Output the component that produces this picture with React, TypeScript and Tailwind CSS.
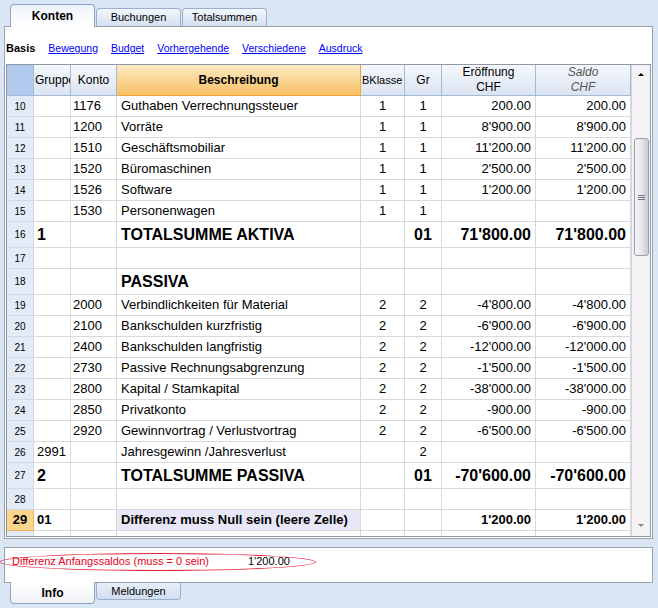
import React from "react";

type Row = {
  n?: number;
  grp?: string;
  konto?: string;
  desc?: string;
  bk?: string;
  gr?: string;
  er?: string;
  sa?: string;
  kind?: "big" | "diff";
};

const rows: Row[] = [
  { n: 10, konto: "1176", desc: "Guthaben Verrechnungssteuer", bk: "1", gr: "1", er: "200.00", sa: "200.00" },
  { n: 11, konto: "1200", desc: "Vorräte", bk: "1", gr: "1", er: "8'900.00", sa: "8'900.00" },
  { n: 12, konto: "1510", desc: "Geschäftsmobiliar", bk: "1", gr: "1", er: "11'200.00", sa: "11'200.00" },
  { n: 13, konto: "1520", desc: "Büromaschinen", bk: "1", gr: "1", er: "2'500.00", sa: "2'500.00" },
  { n: 14, konto: "1526", desc: "Software", bk: "1", gr: "1", er: "1'200.00", sa: "1'200.00" },
  { n: 15, konto: "1530", desc: "Personenwagen", bk: "1", gr: "1" },
  { n: 16, grp: "1", desc: "TOTALSUMME AKTIVA", gr: "01", er: "71'800.00", sa: "71'800.00", kind: "big" },
  { n: 17 },
  { n: 18, desc: "PASSIVA", kind: "big" },
  { n: 19, konto: "2000", desc: "Verbindlichkeiten für Material", bk: "2", gr: "2", er: "-4'800.00", sa: "-4'800.00" },
  { n: 20, konto: "2100", desc: "Bankschulden kurzfristig", bk: "2", gr: "2", er: "-6'900.00", sa: "-6'900.00" },
  { n: 21, konto: "2400", desc: "Bankschulden langfristig", bk: "2", gr: "2", er: "-12'000.00", sa: "-12'000.00" },
  { n: 22, konto: "2730", desc: "Passive Rechnungsabgrenzung", bk: "2", gr: "2", er: "-1'500.00", sa: "-1'500.00" },
  { n: 23, konto: "2800", desc: "Kapital / Stamkapital", bk: "2", gr: "2", er: "-38'000.00", sa: "-38'000.00" },
  { n: 24, konto: "2850", desc: "Privatkonto", bk: "2", gr: "2", er: "-900.00", sa: "-900.00" },
  { n: 25, konto: "2920", desc: "Gewinnvortrag / Verlustvortrag", bk: "2", gr: "2", er: "-6'500.00", sa: "-6'500.00" },
  { n: 26, grp: "2991", desc: "Jahresgewinn /Jahresverlust", gr: "2" },
  { n: 27, grp: "2", desc: "TOTALSUMME PASSIVA", gr: "01", er: "-70'600.00", sa: "-70'600.00", kind: "big" },
  { n: 28 },
  { n: 29, grp: "01", desc: "Differenz muss Null sein (leere Zelle)", er: "1'200.00", sa: "1'200.00", kind: "diff" },
  {},
];

const cols = "grid grid-cols-[27px_37px_46px_244px_44px_37px_94px_95px]";
const cell = "flex items-center border-b border-r border-[#d9d9d9] overflow-hidden whitespace-nowrap";
const hdr =
  "flex items-center bg-linear-to-b from-[#f5f8fc] to-[#dbe4f2] border-b border-r border-[#a5b8d4] overflow-hidden whitespace-nowrap";

function GridRow({ r }: { r: Row }) {
  const big = r.kind === "big";
  const diff = r.kind === "diff";
  const txt = big ? "text-[16px] font-bold" : diff ? "text-[13px] font-bold" : "text-[13px]";

  return (
    <div className={`${cols} ${big ? "h-[26px]" : "h-[21px]"} shrink-0`}>
      <div
        className={`flex items-center justify-center border-b border-r ${
          diff ? "bg-[#fcd48c] border-[#eeb35c] text-[13px] font-bold" : "bg-[#e3ebf6] border-[#cfd9ea] text-[10px]"
        }`}
      >
        {r.n}
      </div>
      <div className={`${cell} pl-[3px] ${txt}`}>{r.grp}</div>
      <div className={`${cell} pl-[2px] text-[13px]`}>{r.konto}</div>
      <div className={`${cell} pl-[4px] ${txt} ${diff ? "bg-[#e7e7f7]" : ""}`}>{r.desc}</div>
      <div className={`${cell} justify-center text-[13px]`}>{r.bk}</div>
      <div className={`${cell} justify-center ${big ? txt : "text-[13px]"}`}>{r.gr}</div>
      <div className={`${cell} justify-end pr-[4px] ${txt}`}>{r.er}</div>
      <div className={`${cell} justify-end pr-[4px] ${txt}`}>{r.sa}</div>
    </div>
  );
}

function ScrollBar() {
  return (
    <div className="w-[19px] h-full bg-[#f4f2f5] border-l border-[#d6d6dd] flex flex-col items-center">
      <div className="h-[17px] w-full flex items-center justify-center pt-[2px]">
        <div className="w-0 h-0 border-x-[3px] border-x-transparent border-b-[3px] border-b-black" />
      </div>
      <div className="h-[56px]" />
      <div className="w-[15px] h-[118px] rounded-[3px] border border-[#9b9ea9] bg-linear-to-r from-[#f7f7f9] via-[#e6e7ec] to-[#c9cbd4] flex flex-col items-center justify-center gap-[1px]">
        <div className="w-[7px] h-px bg-[#6f7380]" />
        <div className="w-[7px] h-px bg-[#6f7380]" />
        <div className="w-[7px] h-px bg-[#6f7380]" />
      </div>
      <div className="flex-1" />
      <div className="h-[17px] w-full flex items-center justify-center pb-[4px]">
        <div className="w-0 h-0 border-x-[3px] border-x-transparent border-t-[3px] border-t-[#8a8a8a]" />
      </div>
    </div>
  );
}

export default function App() {
  const links = ["Bewegung", "Budget", "Vorhergehende", "Verschiedene", "Ausdruck"];

  return (
    <div className="w-[658px] h-[608px] bg-[#dbe6f4] relative overflow-hidden font-['Liberation_Sans',Arial,sans-serif] text-black">
      {/* top tabs */}
      <div className="h-[26px] flex items-end pl-[10px] gap-[1px]">
        <div className="relative z-10 -mb-px w-[85px] h-[23px] bg-linear-to-b from-[#eef3fb] to-white border border-b-0 border-[#8ea4c6] rounded-t-[4px] flex items-center justify-center text-[12px] font-bold">
          Konten
        </div>
        <div className="w-[85px] h-[18px] bg-linear-to-b from-[#f3f7fc] to-[#d4e0f1] border border-b-0 border-[#9bb0d0] rounded-t-[4px] flex items-center justify-center text-[11px]">
          Buchungen
        </div>
        <div className="w-[85px] h-[18px] bg-linear-to-b from-[#f3f7fc] to-[#d4e0f1] border border-b-0 border-[#9bb0d0] rounded-t-[4px] flex items-center justify-center text-[11px]">
          Totalsummen
        </div>
      </div>

      {/* main panel */}
      <div className="ml-[4px] w-[649px] h-[513px] bg-white border border-[#9aa1ab]">
        <div className="h-[37px] pt-[15px] pl-[1px] flex gap-[13px] text-[10.5px] leading-[13px]">
          <span className="font-bold text-[11px]">Basis</span>
          {links.map((l) => (
            <span key={l} className="text-[#0000ff] underline">
              {l}
            </span>
          ))}
        </div>

        <div className="ml-[1px] w-[645px] h-[473px] border border-[#8f98a6] flex overflow-hidden">
          <div className="w-[624px] flex flex-col overflow-hidden">
            <div className={`${cols} h-[31px] shrink-0 text-[12px] leading-[15px]`}>
              <div className="bg-[#b1caed] border-b border-r border-[#a5b8d4]" />
              <div className={`${hdr} pl-[1px]`}>Gruppe</div>
              <div className={`${hdr} justify-center`}>Konto</div>
              <div className="flex items-center justify-center font-bold bg-linear-to-b from-[#fdeac2] to-[#f6c061] border-b border-r border-[#f0a33a]">
                Beschreibung
              </div>
              <div className={`${hdr} pl-[1px] text-[11px]`}>BKlasse</div>
              <div className={`${hdr} justify-center`}>Gr</div>
              <div className={`${hdr} flex-col justify-center`}>
                <span>Eröffnung</span>
                <span>CHF</span>
              </div>
              <div className={`${hdr} flex-col justify-center italic text-[#555]`}>
                <span>Saldo</span>
                <span>CHF</span>
              </div>
            </div>
            {rows.map((r, i) => (
              <GridRow key={i} r={r} />
            ))}
          </div>
          <ScrollBar />
        </div>
      </div>

      {/* info panel */}
      <div className="ml-[4px] mt-[8px] w-[649px] h-[36px] bg-white border border-[#9aa1ab] pl-[7px] pt-[7px] flex text-[11px] leading-[13px]">
        <span className="w-[236px] text-[#e8001c]">Differenz Anfangssaldos (muss = 0 sein)</span>
        <span>1'200.00</span>
      </div>

      {/* bottom tabs */}
      <div className="flex items-start pl-[10px] gap-[1px]">
        <div className="relative z-10 -mt-px w-[85px] h-[22px] bg-linear-to-b from-white to-[#eef1f6] border border-t-0 border-[#8ea4c6] rounded-b-[4px] flex items-center justify-center text-[12px] font-bold">
          Info
        </div>
        <div className="w-[85px] h-[17px] bg-linear-to-b from-[#e6eef9] to-[#d1def0] border border-t-0 border-[#9bb0d0] rounded-b-[4px] flex items-center justify-center text-[11px]">
          Meldungen
        </div>
      </div>

      {/* red marker ellipse */}
      <div className="absolute left-[-1px] top-[553px] w-[317px] h-[18px] rounded-[50%] border border-[#e8203c]" />
    </div>
  );
}
